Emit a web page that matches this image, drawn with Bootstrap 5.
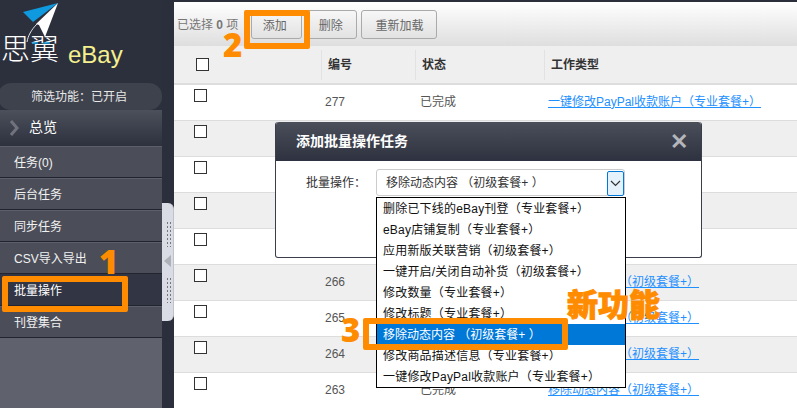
<!DOCTYPE html>
<html lang="zh">
<head>
<meta charset="utf-8">
<title>批量操作</title>
<link href="https://cdn.jsdelivr.net/npm/bootstrap@5.3.0/dist/css/bootstrap.min.css" rel="stylesheet">
<style>
html,body{height:408px;overflow:hidden}
body{background:#2b2f3b;font:12px/1.4 "Liberation Sans","Noto Sans CJK SC",sans-serif;color:#555;position:relative}
.shell{height:408px}
.side{width:162px;flex:none;background:linear-gradient(#2c303c,#2c303c 337px,#5f626d 337px);}
.brand{height:83px;position:relative}
.plane{position:absolute;left:0;top:0}
.brand-cn{position:absolute;left:1px;top:29px;font-size:29px;line-height:42px;color:#fff;font-weight:300}
.brand-en{position:absolute;left:68px;top:41px;font-size:24px;line-height:28px;color:#f4f08e}
.pill{height:27px;margin-left:-2px;border-radius:13px;background:#3e424d;color:#e8e8e8;line-height:29px;text-align:center;padding-right:2px}
.overview{height:36px;background:linear-gradient(#4c505b,#2d313e);color:#fff;font-size:14px;line-height:34px;padding-left:29px;position:relative}
.overview svg{position:absolute;left:9px;top:10px}
.menu-i{height:32px;line-height:33px;padding-left:14px;background:#4b4e59;color:#f2f2f2;border-top:1px solid #5d606a;border-bottom:1px solid #22252f;display:block;text-decoration:none;font-size:12px}
.menu-i.on{background:#323543;border-top-color:#323543;color:#fff;}
.gutter{width:12px;flex:none;position:relative}
.splitter{position:absolute;left:0;top:203px;width:12px;height:118px;background:#d9dce5;border-radius:0 6px 6px 0;border-right:1px solid #bfc2cb}
.dots{position:absolute;left:4px;width:5px;height:26px;background-image:radial-gradient(#777 .7px,transparent .8px);background-size:3px 4px}
.tri{position:absolute;left:2px;top:52px;width:0;height:0;border:6px solid transparent;border-left:0;border-right:7px solid #aeb1b8}
.main{flex:1;min-width:0;background:#fff;margin-top:2px;position:relative}
.tools{height:44px;background:linear-gradient(#fff,#dedede);padding:8px 0 0 3px;color:#777;gap:4px}
.tools .count{margin:7px 7px 0 0;font-size:12px}
.tbtn{height:29px;padding:3px 13px 0;font-size:12px;line-height:25px;color:#666;border:1px solid #aaa;border-radius:3px;background:linear-gradient(#f7f7f7,#e2e2e2)}
.add{width:51px;padding:3px 4px 0 0;margin-left:2px}
.del{width:51px;padding:3px 2px 0 0}
.grid{table-layout:fixed;width:623px;margin:0;border-collapse:collapse;--bs-table-bg:transparent}
.grid th,.grid td{padding:0;border:0;font-size:12px;vertical-align:middle}
.grid thead th{height:38px;background:#efefef;border-bottom:2px solid #ddd;color:#333;font-weight:700}
.th-in{display:block;height:30px;line-height:30px;border-left:1px solid #e2e2e2;padding-left:6px}
.grid td{height:36px;border-bottom:1px solid #ddd;color:#555}
.grid tr.alt td{background:#efefef}
.grid td.n{padding-left:4px}
.grid td.s{padding-left:5px}
.grid td.l{padding-left:4px}
.grid td.c{vertical-align:top;padding:4px 0 0 20px}
.grid th.c{padding-left:22px}
.box{display:block;width:13px;height:13px;border:1px solid #333;background:#fff;outline:0}
.grid a{color:#1e90ff}
.dlg{position:absolute;left:275px;top:122px;width:427px;height:136px;background:#fff;border:1px solid #3a3e4a;border-top:0;border-radius:3px}
.dlg-head{height:39px;background:linear-gradient(#4b4f5a,#2e3240);color:#fff;font-size:14px;font-weight:700;padding:0 13px 0 20px;border-radius:3px 3px 0 0}
.x{color:#b4b6bb;font-size:22px;font-weight:700;line-height:1}
.dlg-body{padding:8px 0 0 0}
.lab{width:90px;text-align:right;color:#333;line-height:28px}
.pick{width:249px;height:27px;border:1px solid #ccc;border-radius:3px;position:relative;background:#fff;line-height:27px;color:#333;padding-left:9px;margin-left:10px}
.arrow{position:absolute;right:0;top:1px;width:17px;height:25px;background:#e5f1fb;border:1px solid #0078d7;border-radius:2px}
.arrow svg{display:block;margin:8px auto 0}
.opts{position:absolute;left:-1px;top:27px;width:250px;background:#fff;border:1px solid #000;padding:0;z-index:2}
.opt{height:21px;line-height:23px;padding-left:6px;color:#111;white-space:nowrap;letter-spacing:.2px}
.opt.sel{background:#0078d7;color:#fff;letter-spacing:0}
.ring{position:absolute;border:6px solid #ff8c00;border-radius:2px;z-index:5}
.r1{left:2px;top:276px;width:126px;height:36px}
.r2{left:244px;top:10px;width:66px;height:39px}
.r3{left:363px;top:318px;width:205px;height:32px}
.tag{position:absolute;color:#ff8c00;font:800 33px/34px "Open Sans",sans-serif;z-index:6}
.t1{left:99px;top:245px}
.t2{left:223px;top:28px}
.t3{left:341px;top:313px}
.fresh{position:absolute;left:567px;top:285px;color:#ff8c00;font:900 31px/36px "Noto Sans CJK SC",sans-serif;-webkit-text-stroke:1px #ff8c00;z-index:6;white-space:nowrap}
</style>
</head>
<body>
<div class="shell d-flex">
  <aside class="side d-flex flex-column">
    <div class="brand">
      <span class="brand-cn">思翼</span>
      <span class="brand-en">eBay</span>
      <svg class="plane" width="62" height="50" viewBox="0 0 62 50">
        <path d="M23 12 58 3 33 22Z" fill="#0f9ae0"/>
        <path d="M58 3 36 24 39 25 45 37Z" fill="#fff"/>
        <path d="M37 24C31 30 28 36 27 42" fill="none" stroke="#dfe3e8" stroke-width="1"/>
        <path d="M32 43h6M43 43h7" stroke="#0f9ae0" stroke-width="1.5"/>
      </svg>
    </div>
    <div class="pill">筛选功能：已开启</div>
    <div class="overview">
      <svg width="10" height="16" viewBox="0 0 10 16"><path d="M2 1 8 8 2 15" fill="none" stroke="#70737c" stroke-width="3"/></svg>
      总览
    </div>
    <a class="menu-i" href="#">任务(0)</a>
    <a class="menu-i" href="#">后台任务</a>
    <a class="menu-i" href="#">同步任务</a>
    <a class="menu-i" href="#">CSV导入导出</a>
    <a class="menu-i on" href="#">批量操作</a>
    <a class="menu-i" href="#">刊登集合</a>
  </aside>
  <div class="gutter">
    <div class="splitter">
      <span class="dots" style="top:18px"></span>
      <span class="tri"></span>
      <span class="dots" style="top:74px"></span>
    </div>
  </div>
  <main class="main">
    <div class="tools d-flex align-items-start">
      <span class="count">已选择 <b>0</b> 项</span>
      <button class="tbtn add" type="button">添加</button>
      <button class="tbtn del" type="button">删除</button>
      <button class="tbtn" type="button">重新加载</button>
    </div>
    <table class="table grid">
      <colgroup><col style="width:147px"><col style="width:94px"><col style="width:129px"><col></colgroup>
      <thead><tr>
        <th class="c"><span class="box"></span></th>
        <th><span class="th-in">编号</span></th>
        <th><span class="th-in">状态</span></th>
        <th><span class="th-in">工作类型</span></th>
      </tr></thead>
      <tbody>
        <tr><td class="c"><span class="box"></span></td><td class="n">277</td><td class="s">已完成</td><td class="l"><a href="#">一键修改PayPal收款账户（专业套餐+）</a></td></tr>
        <tr class="alt"><td class="c"><span class="box"></span></td><td class="n">270</td><td class="s">已完成</td><td class="l"><a href="#">移除动态内容（初级套餐+）</a></td></tr>
        <tr><td class="c"><span class="box"></span></td><td class="n">269</td><td class="s">已完成</td><td class="l"><a href="#">移除动态内容（初级套餐+）</a></td></tr>
        <tr class="alt"><td class="c"><span class="box"></span></td><td class="n">268</td><td class="s">已完成</td><td class="l"><a href="#">移除动态内容（初级套餐+）</a></td></tr>
        <tr><td class="c"><span class="box"></span></td><td class="n">267</td><td class="s">已完成</td><td class="l"><a href="#">移除动态内容（初级套餐+）</a></td></tr>
        <tr class="alt"><td class="c"><span class="box"></span></td><td class="n">266</td><td class="s">已完成</td><td class="l"><a href="#">移除动态内容（初级套餐+）</a></td></tr>
        <tr><td class="c"><span class="box"></span></td><td class="n">265</td><td class="s">已完成</td><td class="l"><a href="#">移除动态内容（初级套餐+）</a></td></tr>
        <tr class="alt"><td class="c"><span class="box"></span></td><td class="n">264</td><td class="s">已完成</td><td class="l"><a href="#">移除动态内容（初级套餐+）</a></td></tr>
        <tr><td class="c"><span class="box"></span></td><td class="n">263</td><td class="s">已完成</td><td class="l"><a href="#">移除动态内容（初级套餐+）</a></td></tr>
      </tbody>
    </table>
  </main>
</div>

<div class="dlg">
  <div class="dlg-head d-flex align-items-center justify-content-between">
    <span>添加批量操作任务</span><span class="x">✕</span>
  </div>
  <div class="dlg-body d-flex">
    <span class="lab">批量操作：</span>
    <div class="pick">移除动态内容 （初级套餐+ ）
      <span class="arrow"><svg width="11" height="7" viewBox="0 0 11 7"><path d="M1 1 5.500 5.500 10 1" fill="none" stroke="#333" stroke-width="1.200"/></svg></span>
      <div class="opts">
        <div class="opt">删除已下线的eBay刊登（专业套餐+）</div>
        <div class="opt">eBay店铺复制（专业套餐+）</div>
        <div class="opt">应用新版关联营销（初级套餐+）</div>
        <div class="opt">一键开启/关闭自动补货（初级套餐+）</div>
        <div class="opt">修改数量（专业套餐+）</div>
        <div class="opt">修改标题（专业套餐+）</div>
        <div class="opt sel">移除动态内容 （初级套餐+ ）</div>
        <div class="opt">修改商品描述信息（专业套餐+）</div>
        <div class="opt">一键修改PayPal收款账户（专业套餐+）</div>
      </div>
    </div>
  </div>
</div>

<div class="ring r1"></div>
<div class="ring r2"></div>
<div class="ring r3"></div>
<span class="tag t1">1</span>
<span class="tag t2">2</span>
<span class="tag t3">3</span>
<span class="fresh">新功能</span>
</body>
</html>
